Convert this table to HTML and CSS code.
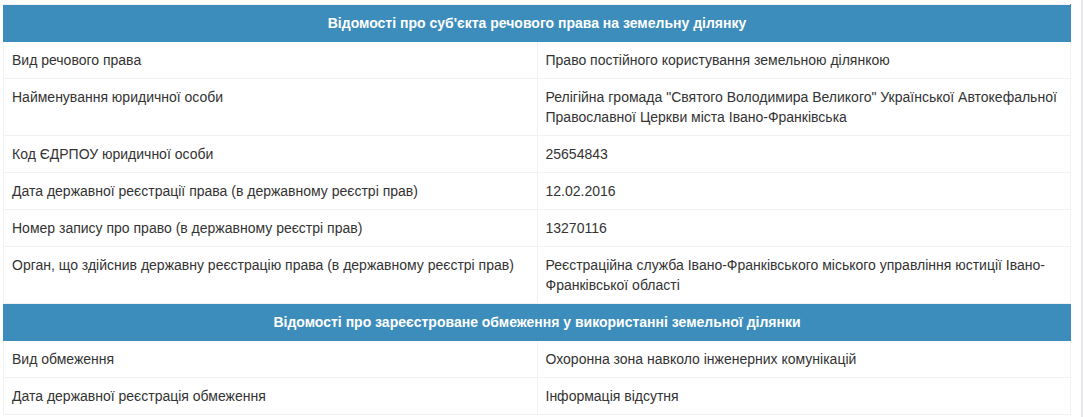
FILE: index.html
```html
<!DOCTYPE html>
<html lang="uk">
<head>
<meta charset="utf-8">
<title>Відомості</title>
<link rel="stylesheet" href="styles.css">
</head>
<body>
<div class="page">
  <div class="content">
    <table class="info">
      <tbody>
        <tr class="head"><th colspan="2">Відомості про суб'єкта речового права на земельну ділянку</th></tr>
        <tr><td>Вид речового права</td><td>Право постійного користування земельною ділянкою</td></tr>
        <tr><td>Найменування юридичної особи</td><td>Релігійна громада "Святого Володимира Великого" Української Автокефальної Православної Церкви міста Івано-Франківська</td></tr>
        <tr><td>Код ЄДРПОУ юридичної особи</td><td>25654843</td></tr>
        <tr><td>Дата державної реєстрації права (в державному реєстрі прав)</td><td>12.02.2016</td></tr>
        <tr><td>Номер запису про право (в державному реєстрі прав)</td><td>13270116</td></tr>
        <tr><td>Орган, що здійснив державну реєстрацію права (в державному реєстрі прав)</td><td>Реєстраційна служба Івано-Франківського міського управління юстиції Івано-Франківської області</td></tr>
        <tr class="head"><th colspan="2">Відомості про зареєстроване обмеження у використанні земельної ділянки</th></tr>
        <tr><td>Вид обмеження</td><td>Охоронна зона навколо інженерних комунікацій</td></tr>
        <tr><td>Дата державної реєстрація обмеження</td><td>Інформація відсутня</td></tr>
      </tbody>
    </table>
  </div>
  <div class="rail"></div>
</div>
</body>
</html>
```

FILE: styles.css
```css
html, body {
  margin: 0;
  padding: 0;
  background: #ffffff;
}
body {
  font-family: "Liberation Sans", Arial, Helvetica, sans-serif;
  font-size: 14px;
  line-height: 20px;
  color: #333333;
}
.page {
  display: flex;
  min-height: 417px;
}
.content {
  flex: 1;
  padding: 4px 10px 0 3px;
}
.rail {
  width: 2px;
  background: #e6e6ec;
}
.info {
  width: 1068px;
  border-collapse: collapse;
  table-layout: fixed;
  border: 1px solid #f2f2f2;
}
.info td {
  width: 50%;
  padding: 8px;
  border: 1px solid #f2f2f2;
  vertical-align: top;
  text-align: left;
}
.info th {
  background: #3c8dbc;
  color: #ffffff;
  font-weight: bold;
  text-align: center;
  padding: 8px;
  border: 1px solid #3c8dbc;
  border-top-color: #f2f2f2;
}
```
